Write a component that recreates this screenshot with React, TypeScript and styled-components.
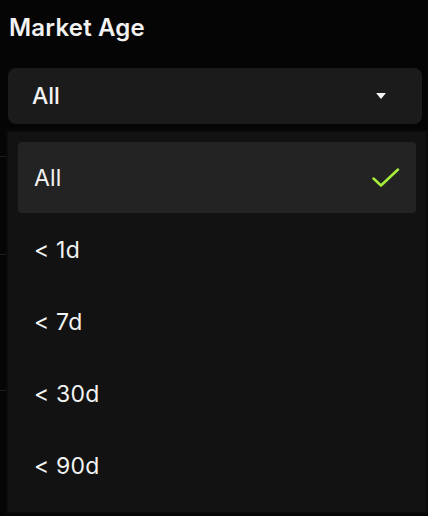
import React from "react";
import styled, { createGlobalStyle } from "styled-components";

const GlobalStyle = createGlobalStyle`
  html, body {
    margin: 0;
    padding: 0;
    background: #050505;
  }
  body {
    font-family: Inter, "Noto Sans", "Liberation Sans", sans-serif;
    color: #f2f2f2;
    -webkit-font-smoothing: antialiased;
  }
`;

const Page = styled.div`
  position: relative;
  width: 428px;
  height: 516px;
  overflow: hidden;
`;

const Section = styled.div`
  padding: 0 6px 0 8px;
`;

const Title = styled.div`
  font-size: 24px;
  font-weight: 600;
  line-height: 30px;
  padding: 13px 0 0 1px;
  letter-spacing: 0.2px;
`;

const Trigger = styled.div`
  margin-top: 25px;
  height: 56px;
  display: flex;
  align-items: center;
  justify-content: space-between;
  padding: 0 36px 0 24px;
  background: #1b1b1b;
  border-radius: 8px;
  font-size: 23px;
  font-weight: 500;
`;

const Caret = styled.span`
  width: 0;
  height: 0;
  border-left: 5px solid transparent;
  border-right: 5px solid transparent;
  border-top: 6px solid #f4f4f4;
  border-radius: 1px;
`;

/* content under the open menu */
const Underlay = styled.div`
  margin-top: 8px;
`;

const UnderRow = styled.div<{ h: number }>`
  height: ${({ h }) => h}px;
  border-bottom: 1px solid #1c1c1c;
`;

const Menu = styled.div`
  position: absolute;
  left: 8px;
  top: 132px;
  width: 418px;
  box-sizing: border-box;
  padding: 10px;
  background: #121212;
  box-shadow: 0 0 0 2px #0a0a0a;
`;

const Item = styled.div<{ selected?: boolean }>`
  height: 71px;
  margin-bottom: 1px;
  display: flex;
  align-items: center;
  justify-content: space-between;
  padding: 0 16px 0 16px;
  border-radius: 4px;
  font-size: 23px;
  font-weight: 400;
  letter-spacing: 0.2px;
  color: #f2f2f2;
  background: ${({ selected }) => (selected ? "#232323" : "transparent")};
`;

const Check = () => (
  <svg width="28" height="22" viewBox="0 0 28 22" fill="none">
    <path
      d="M1.5 11.5 L9 18.5 L26 2.5"
      stroke="#a6ee3a"
      strokeWidth="2.5"
      strokeLinecap="round"
      strokeLinejoin="round"
    />
  </svg>
);

const options = ["All", "< 1d", "< 7d", "< 30d", "< 90d"];

export default function App() {
  const selected = "All";
  return (
    <Page>
      <GlobalStyle />
      <Section>
        <Title>Market Age</Title>
        <Trigger>
          <span>{selected}</span>
          <Caret />
        </Trigger>
      </Section>
      <Underlay>
        <UnderRow h={24} />
        <UnderRow h={97} />
        <UnderRow h={135} />
      </Underlay>
      <Menu>
        {options.map((o) => (
          <Item key={o} selected={o === selected}>
            <span>{o}</span>
            {o === selected && <Check />}
          </Item>
        ))}
      </Menu>
    </Page>
  );
}
